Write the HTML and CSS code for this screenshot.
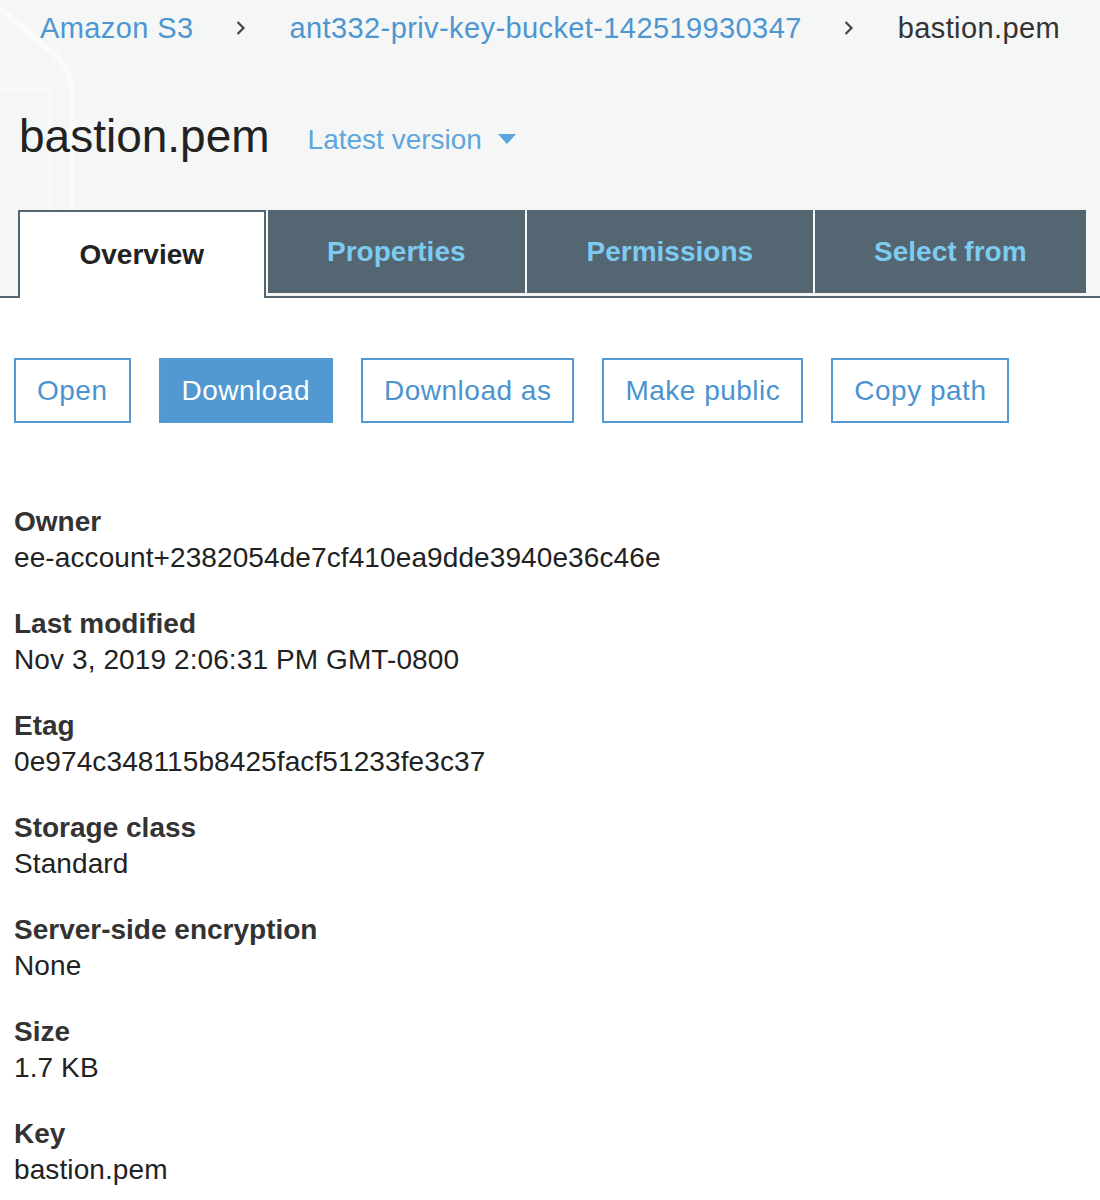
FILE: index.html
```html
<!DOCTYPE html>
<html>
<head>
<meta charset="utf-8">
<link rel="stylesheet" href="styles.css">
</head>
<body>
<div class="header">
  <svg class="deco" width="120" height="298" viewBox="0 0 120 298">
    <path d="M-10 0 L55 55 Q72 70 72 90 L72 298" fill="none" stroke="#fafbfb" stroke-width="6"/>
    <path d="M0 90 L50 90 L50 298" fill="none" stroke="#f9fafa" stroke-width="4"/>
  </svg>
  <nav class="crumbs">
    <a class="crumb-link">Amazon S3</a>
    <svg class="chev" width="11" height="16" viewBox="0 0 11 16"><path d="M2.5 2 L8.5 8 L2.5 14" fill="none" stroke="#444" stroke-width="2.2"/></svg>
    <a class="crumb-link">ant332-priv-key-bucket-142519930347</a>
    <svg class="chev" width="11" height="16" viewBox="0 0 11 16"><path d="M2.5 2 L8.5 8 L2.5 14" fill="none" stroke="#444" stroke-width="2.2"/></svg>
    <span class="crumb-current">bastion.pem</span>
  </nav>
  <div class="title-row">
    <h1 class="title">bastion.pem</h1>
    <span class="version">Latest version</span>
    <svg class="caret" width="18" height="10" viewBox="0 0 18 10"><path d="M0 0 L18 0 L9 10 Z" fill="#5aa3dc"/></svg>
  </div>
  <div class="tabs">
    <div class="tab tab-active">Overview</div>
    <div class="tab">Properties</div>
    <div class="tab">Permissions</div>
    <div class="tab">Select from</div>
  </div>
</div>
<div class="content">
  <div class="actions">
    <button class="btn">Open</button>
    <button class="btn btn-primary">Download</button>
    <button class="btn">Download as</button>
    <button class="btn">Make public</button>
    <button class="btn">Copy path</button>
  </div>
  <dl class="details">
    <div class="item"><dt>Owner</dt><dd>ee-account+2382054de7cf410ea9dde3940e36c46e</dd></div>
    <div class="item"><dt>Last modified</dt><dd>Nov 3, 2019 2:06:31 PM GMT-0800</dd></div>
    <div class="item"><dt>Etag</dt><dd>0e974c348115b8425facf51233fe3c37</dd></div>
    <div class="item"><dt>Storage class</dt><dd>Standard</dd></div>
    <div class="item"><dt>Server-side encryption</dt><dd>None</dd></div>
    <div class="item"><dt>Size</dt><dd>1.7 KB</dd></div>
    <div class="item"><dt>Key</dt><dd>bastion.pem</dd></div>
  </dl>
</div>
</body>
</html>
```
FILE: styles.css
```css
html, body {
  margin: 0;
  padding: 0;
  background: #ffffff;
  font-family: "Liberation Sans", Arial, Helvetica, sans-serif;
  color: #222;
}
.header {
  position: relative;
  background: #f5f6f6;
  overflow: hidden;
}
.deco {
  position: absolute;
  left: 0;
  top: 0;
}
.crumbs {
  position: relative;
  display: flex;
  align-items: center;
  padding: 8px 0 0 40px;
  height: 40px;
  font-size: 29px;
  line-height: 40px;
  letter-spacing: 0.4px;
}
.crumb-link {
  color: #4d96d1;
  text-decoration: none;
}
.crumb-current {
  color: #333;
}
.chev {
  margin: 0 44px 0 41px;
}
.title-row {
  position: relative;
  display: flex;
  align-items: center;
  margin-top: 60px;
  padding-left: 19px;
  height: 56px;
}
.title {
  margin: 0;
  font-size: 46px;
  font-weight: normal;
  line-height: 56px;
  color: #222;
}
.version {
  margin-left: 38px;
  font-size: 28px;
  color: #5fa6dd;
  line-height: 56px;
  padding-top: 8px;
}
.caret {
  margin-left: 16px;
  margin-top: 6px;
}
.tabs {
  position: relative;
  display: flex;
  align-items: flex-start;
  gap: 2px;
  margin-top: 46px;
  padding-left: 18px;
  height: 86px;
  border-bottom: 2px solid #546672;
}
.tab {
  height: 83px;
  padding: 0 59.5px;
  display: flex;
  align-items: center;
  justify-content: center;
  background: #546672;
  color: #7dcbf0;
  font-size: 28px;
  font-weight: bold;
  box-sizing: border-box;
}
.tab-active {
  height: 88px;
  margin-bottom: -2px;
  padding: 0 59.5px 0;
  background: #ffffff;
  color: #222;
  border: 2px solid #546672;
  border-bottom: none;
}
.content {
  padding: 60px 14px 20px;
}
.actions {
  display: flex;
  gap: 28px;
}
.btn {
  height: 65px;
  padding: 0 21px;
  border: 2px solid #5499d2;
  background: #ffffff;
  color: #4b93cf;
  font-family: "Liberation Sans", Arial, Helvetica, sans-serif;
  font-size: 28px;
  letter-spacing: 0.5px;
  box-sizing: border-box;
}
.btn-primary {
  background: #5299d3;
  color: #ffffff;
}
.details {
  margin: 81px 0 0;
}
.item {
  margin-bottom: 30px;
}
.item dt {
  font-weight: bold;
  font-size: 28px;
  line-height: 36px;
  color: #333;
}
.item dd {
  margin: 0;
  font-size: 28px;
  line-height: 36px;
  color: #222;
  letter-spacing: 0.1px;
}
```
